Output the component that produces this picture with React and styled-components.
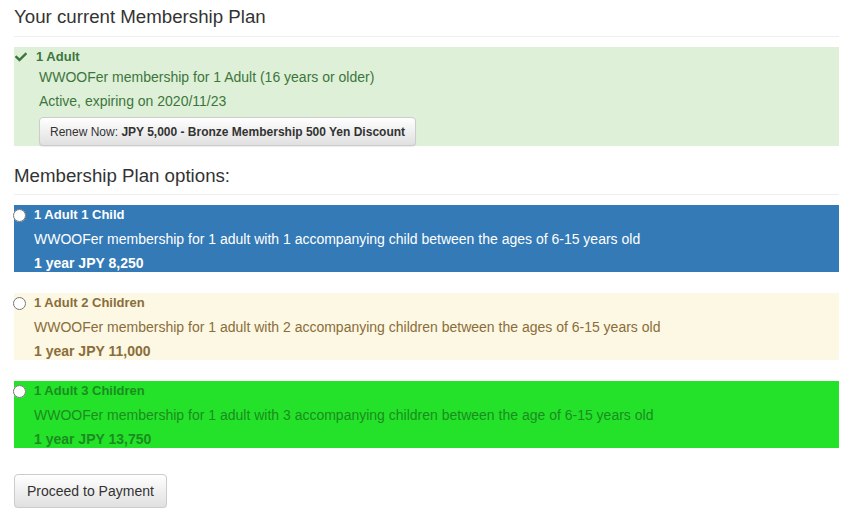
import React from 'react';
import styled, {createGlobalStyle} from "styled-components";
import {FaCheck} from "react-icons/fa";

const GlobalStyle = createGlobalStyle`
    body{
        margin:0;
        background:#fff;
        font-family:"Liberation Sans", Arial, Helvetica, sans-serif;
        font-size:13px;
        color:#333;
    }
`

const Page = styled.div`
    padding:0 10px 0 14px;
`

const Heading = styled.h4`
    margin:${props => props.$top || 7}px 0 10px;
    padding-bottom:${props => props.$pad || 9}px;
    border-bottom:1px solid #eee;
    font-size:18.7px;
    font-weight:normal;
    line-height:20px;
    color:#333;
`

const CurrentPlan = styled.div`
    display:grid;
    grid-template-columns:22px 1fr;
    background-color:#dff0d8;
    color:#3c763d;
    line-height:20px;
`

const Check = styled(FaCheck)`
    width:12px;
    height:12px;
    margin:4px 0 0 1px;
`

const PlanTitle = styled.div`
    font-weight:bold;
`

const PlanText = styled.div`
    grid-column:2;
    padding-left:3px;
    margin-top:${props => props.$gap || 0}px;
    font-size:14px;
`

const RenewButton = styled.button`
    grid-column:2;
    justify-self:start;
    margin:6px 0 0 3px;
    height:29px;
    padding:0 10px;
    border:1px solid #ccc;
    border-radius:4px;
    background-image:linear-gradient(to bottom,#fff 0,#e0e0e0 100%);
    box-shadow:inset 0 1px 0 rgba(255,255,255,.15),0 1px 1px rgba(0,0,0,.075);
    font-family:inherit;
    font-size:12px;
    color:#333;
    cursor:pointer;

    & b{
        font-weight:bold;
    }
`

const OptionList = styled.div`
    display:flex;
    flex-direction:column;
    gap:21px;
`

const tones = {
    blue:{bg:"#337ab7",fg:"#fff"},
    cream:{bg:"#fcf8e3",fg:"#8a6d3b"},
    lime:{bg:"#24e229",fg:"#1b8d20"},
}

const Option = styled.label`
    display:grid;
    grid-template-columns:20px 1fr;
    height:67px;
    background-color:${props => tones[props.$tone].bg};
    color:${props => tones[props.$tone].fg};
    line-height:20px;
    cursor:pointer;
`

const Radio = styled.input`
    width:13px;
    height:13px;
    margin:4px 0 0 -1px;
`

const OptionTitle = styled.div`
    font-weight:bold;
`

const OptionText = styled.div`
    grid-column:2;
    margin-top:4px;
    font-size:14px;
    font-weight:${props => props.$bold ? "bold" : "normal"};
`

const ProceedButton = styled.button`
    margin-top:26px;
    height:34px;
    padding:0 12px;
    border:1px solid #ccc;
    border-radius:4px;
    background-image:linear-gradient(to bottom,#fff 0,#e0e0e0 100%);
    box-shadow:inset 0 1px 0 rgba(255,255,255,.15),0 1px 1px rgba(0,0,0,.075);
    font-family:inherit;
    font-size:14px;
    color:#333;
    cursor:pointer;
`

const options = [
    {tone:"blue",title:"1 Adult 1 Child",text:"WWOOFer membership for 1 adult with 1 accompanying child between the ages of 6-15 years old",price:"1 year JPY 8,250"},
    {tone:"cream",title:"1 Adult 2 Children",text:"WWOOFer membership for 1 adult with 2 accompanying children between the ages of 6-15 years old",price:"1 year JPY 11,000"},
    {tone:"lime",title:"1 Adult 3 Children",text:"WWOOFer membership for 1 adult with 3 accompanying children between the age of 6-15 years old",price:"1 year JPY 13,750"},
]

export default function App(){
    return(
        <>
            <GlobalStyle/>
            <Page>
                <Heading>Your current Membership Plan</Heading>
                <CurrentPlan>
                    <Check/>
                    <PlanTitle>1 Adult</PlanTitle>
                    <PlanText>WWOOFer membership for 1 Adult (16 years or older)</PlanText>
                    <PlanText $gap={4}>Active, expiring on 2020/11/23</PlanText>
                    <RenewButton>Renew Now: <b>JPY 5,000 - Bronze Membership 500 Yen Discount</b></RenewButton>
                </CurrentPlan>

                <Heading $top={20} $pad={8}>Membership Plan options:</Heading>
                <OptionList>
                    {options.map((option,index) => {
                        return (
                            <Option key={index} $tone={option.tone}>
                                <Radio type="radio" name="plan" value={index}/>
                                <OptionTitle>{option.title}</OptionTitle>
                                <OptionText>{option.text}</OptionText>
                                <OptionText $bold>{option.price}</OptionText>
                            </Option>
                        )})}
                </OptionList>
                <ProceedButton>Proceed to Payment</ProceedButton>
            </Page>
        </>
    );
}
